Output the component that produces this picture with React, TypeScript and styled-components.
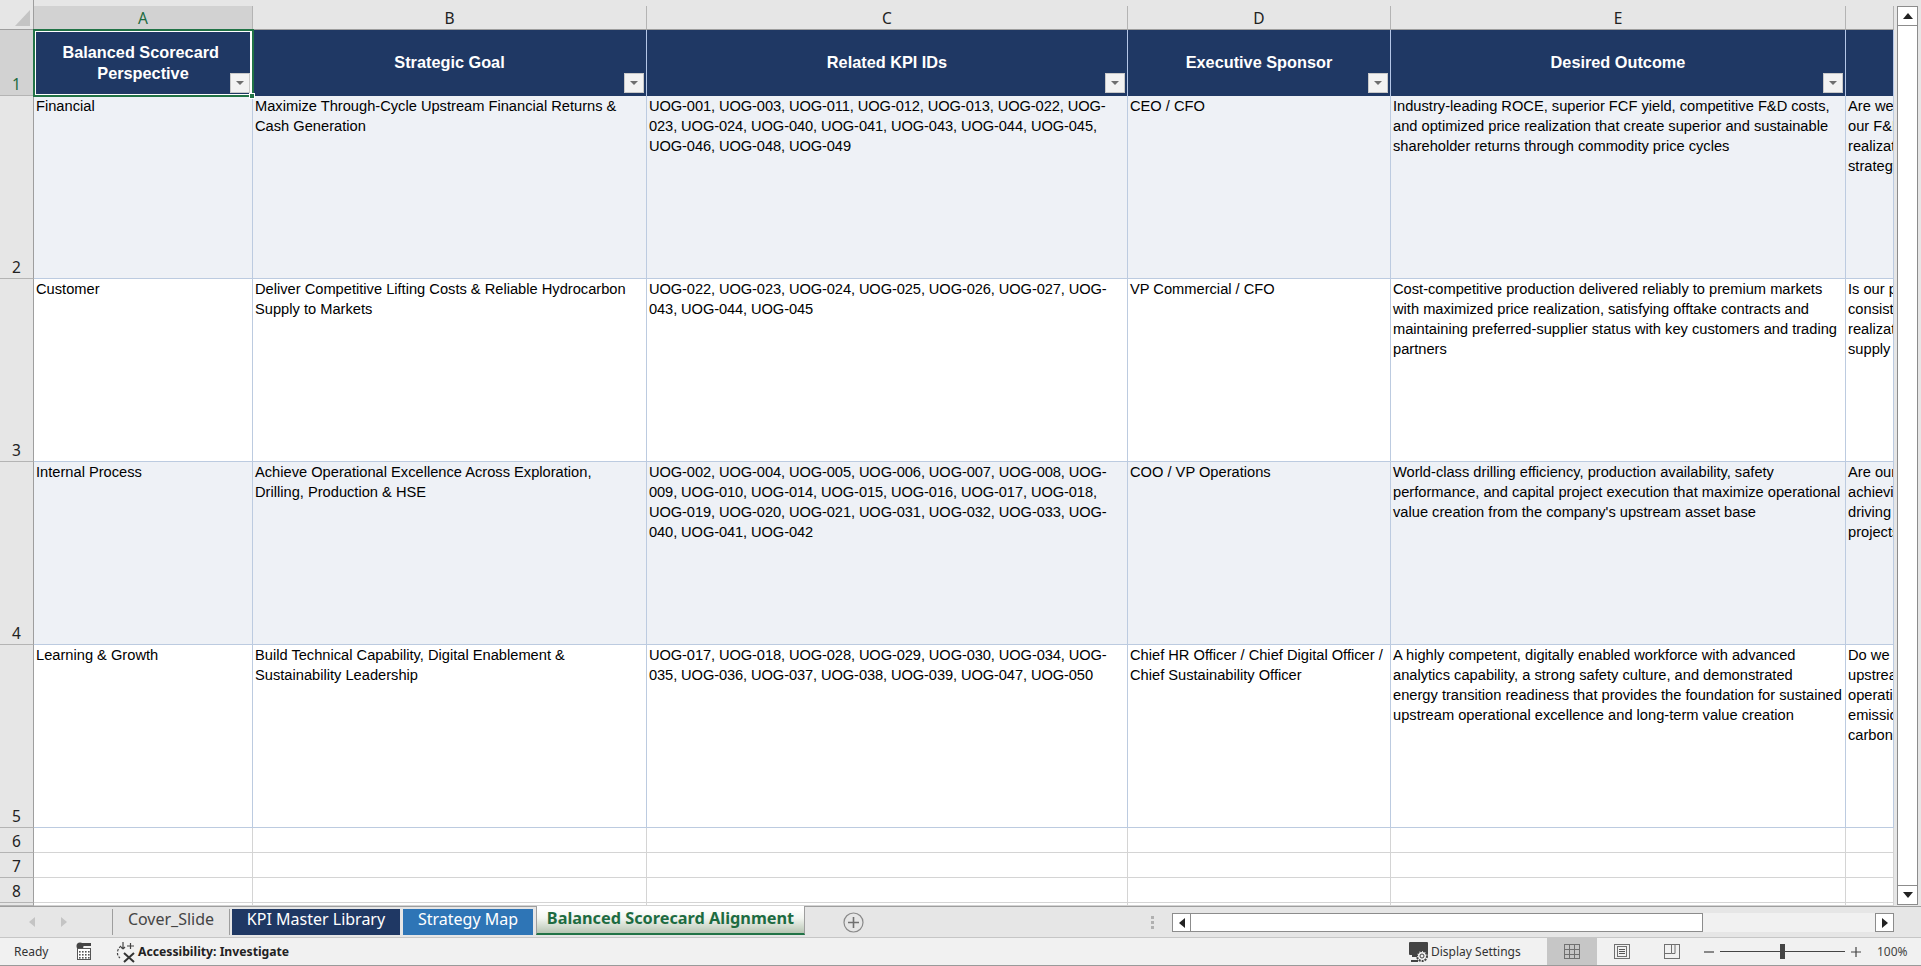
import React from 'react';
import styled, { createGlobalStyle } from 'styled-components';

interface RowData {
  row: number;
  alt: boolean;
  perspective: string[];
  goal: string[];
  kpis: string[];
  sponsor: string[];
  outcome: string[];
  question: string[];
}

const columns = [
  { letter: 'A', title: ['Balanced Scorecard\u00a0', 'Perspective'] },
  { letter: 'B', title: ['Strategic Goal'] },
  { letter: 'C', title: ['Related KPI IDs'] },
  { letter: 'D', title: ['Executive Sponsor'] },
  { letter: 'E', title: ['Desired Outcome'] },
];

const rows: RowData[] = [
  {
    row: 2,
    alt: true,
    perspective: ['Financial'],
    goal: ['Maximize Through-Cycle Upstream Financial Returns &', 'Cash Generation'],
    kpis: [
      'UOG-001, UOG-003, UOG-011, UOG-012, UOG-013, UOG-022, UOG-',
      '023, UOG-024, UOG-040, UOG-041, UOG-043, UOG-044, UOG-045,',
      'UOG-046, UOG-048, UOG-049',
    ],
    sponsor: ['CEO / CFO'],
    outcome: [
      'Industry-leading ROCE, superior FCF yield, competitive F&D costs,',
      'and optimized price realization that create superior and sustainable',
      'shareholder returns through commodity price cycles',
    ],
    question: ['Are we', 'our F&D', 'realization', 'strategy'],
  },
  {
    row: 3,
    alt: false,
    perspective: ['Customer'],
    goal: ['Deliver Competitive Lifting Costs & Reliable Hydrocarbon', 'Supply to Markets'],
    kpis: [
      'UOG-022, UOG-023, UOG-024, UOG-025, UOG-026, UOG-027, UOG-',
      '043, UOG-044, UOG-045',
    ],
    sponsor: ['VP Commercial / CFO'],
    outcome: [
      'Cost-competitive production delivered reliably to premium markets',
      'with maximized price realization, satisfying offtake contracts and',
      'maintaining preferred-supplier status with key customers and trading',
      'partners',
    ],
    question: ['Is our product', 'consistently', 'realization', 'supply'],
  },
  {
    row: 4,
    alt: true,
    perspective: ['Internal Process'],
    goal: ['Achieve Operational Excellence Across Exploration,', 'Drilling, Production & HSE'],
    kpis: [
      'UOG-002, UOG-004, UOG-005, UOG-006, UOG-007, UOG-008, UOG-',
      '009, UOG-010, UOG-014, UOG-015, UOG-016, UOG-017, UOG-018,',
      'UOG-019, UOG-020, UOG-021, UOG-031, UOG-032, UOG-033, UOG-',
      '040, UOG-041, UOG-042',
    ],
    sponsor: ['COO / VP Operations'],
    outcome: [
      'World-class drilling efficiency, production availability, safety',
      'performance, and capital project execution that maximize operational',
      "value creation from the company's upstream asset base",
    ],
    question: ['Are our', 'achieving', 'driving', 'projects'],
  },
  {
    row: 5,
    alt: false,
    perspective: ['Learning & Growth'],
    goal: ['Build Technical Capability, Digital Enablement &', 'Sustainability Leadership'],
    kpis: [
      'UOG-017, UOG-018, UOG-028, UOG-029, UOG-030, UOG-034, UOG-',
      '035, UOG-036, UOG-037, UOG-038, UOG-039, UOG-047, UOG-050',
    ],
    sponsor: ['Chief HR Officer / Chief Digital Officer /', 'Chief Sustainability Officer'],
    outcome: [
      'A highly competent, digitally enabled workforce with advanced',
      'analytics capability, a strong safety culture, and demonstrated',
      'energy transition readiness that provides the foundation for sustained',
      'upstream operational excellence and long-term value creation',
    ],
    question: ['Do we', 'upstream', 'operational', 'emissions', 'carbon'],
  },
];

const uiFont = `'Noto Sans', 'Open Sans', sans-serif`;
const cellFont = `'Liberation Sans', Arial, sans-serif`;

const GlobalStyle = createGlobalStyle`
  html, body {
    margin: 0;
    padding: 0;
    background: #e6e6e6;
    overflow: hidden;
  }
`;

const Window = styled.div`
  width: 1921px;
  height: 966px;
  display: flex;
  flex-direction: column;
  overflow: hidden;
  background: #e6e6e6;
`;

const Workspace = styled.div`
  height: 906px;
  display: flex;
  flex: none;
`;

const Sheet = styled.div`
  width: 1894px;
  flex: none;
  display: grid;
  grid-template-columns: 34px 219px 394px 481px 263px 455px 48px;
  grid-template-rows: 30px 66px repeat(4, 183px) repeat(3, 25px) 3px;
  overflow: hidden;
`;

const Corner = styled.div`
  padding-top: 10px;
  padding-left: 15px;
  box-sizing: border-box;
  border-right: 1px solid #9e9e9e;
  border-bottom: 1px solid #9e9e9e;
`;

const ColHeader = styled.div<{ $selected?: boolean }>`
  margin-top: 6px;
  box-sizing: border-box;
  display: flex;
  align-items: center;
  justify-content: center;
  font-family: ${uiFont};
  font-size: 15.5px;
  color: ${props => (props.$selected ? '#1d6b41' : '#222')};
  background: ${props => (props.$selected ? '#d2d2d2' : '#e6e6e6')};
  border-right: 1px solid #b4b4b4;
  border-bottom: 1px solid #9e9e9e;
`;

const RowHeader = styled.div<{ $selected?: boolean }>`
  box-sizing: border-box;
  display: flex;
  align-items: flex-end;
  justify-content: center;
  padding-bottom: 1px;
  font-family: ${uiFont};
  font-size: 15.5px;
  line-height: 20px;
  color: ${props => (props.$selected ? '#1d6b41' : '#222')};
  background: ${props => (props.$selected ? '#d2d2d2' : '#e6e6e6')};
  border-right: 1px solid #9e9e9e;
  border-bottom: 1px solid #b4b4b4;
`;

const HeaderCell = styled.div<{ $selected?: boolean }>`
  position: relative;
  box-sizing: border-box;
  display: flex;
  flex-direction: column;
  align-items: center;
  justify-content: center;
  background: #1f3864;
  color: #fff;
  font-family: ${cellFont};
  font-size: 16.3px;
  font-weight: 700;
  line-height: 21.5px;
  border-right: 1px solid #b4c6e7;
  ${props =>
    props.$selected &&
    `
    outline: 2px solid #217346;
    outline-offset: -1px;
    box-shadow: inset 0 0 0 2px #fff;
    z-index: 2;
  `}
`;

const SelectionHandle = styled.span`
  position: absolute;
  right: -3px;
  bottom: -3px;
  width: 4px;
  height: 4px;
  background: #217346;
  border: 1px solid #fff;
`;

const FilterButton = styled.span`
  position: absolute;
  right: 2px;
  bottom: 3px;
  width: 20px;
  height: 20px;
  box-sizing: border-box;
  display: flex;
  align-items: center;
  justify-content: center;
  background: #f2f2f2;
  border: 1px solid #c8c8c8;
  &::before {
    content: '';
    border-left: 4px solid transparent;
    border-right: 4px solid transparent;
    border-top: 4px solid #6e6e6e;
  }
`;

const DataCell = styled.div<{ $alt?: boolean; $tight?: boolean }>`
  box-sizing: border-box;
  padding: 0 1px 0 2px;
  overflow: hidden;
  background: ${props => (props.$alt ? '#eef1f6' : '#fff')};
  color: #000;
  font-family: ${cellFont};
  font-size: 14.67px;
  line-height: 20px;
  letter-spacing: ${props => (props.$tight ? '-0.1px' : 'normal')};
  border-right: 1px solid #bccbe0;
  border-bottom: 1px solid #bccbe0;
`;

const CellLine = styled.div`
  white-space: nowrap;
`;

const EmptyCell = styled.div`
  box-sizing: border-box;
  background: #fff;
  border-right: 1px solid #d4d4d4;
  border-bottom: 1px solid #d4d4d4;
`;

const VScroll = styled.div`
  width: 27px;
  flex: none;
  box-sizing: border-box;
  padding: 6px 0 1px 3px;
`;

const VScrollTrack = styled.div`
  width: 21px;
  height: 100%;
  box-sizing: border-box;
  display: flex;
  flex-direction: column;
  justify-content: space-between;
  background: #f1f1f1;
`;

const VThumb = styled.div`
  flex: 1;
  background: #fff;
  border: 1px solid #8c8c8c;
  border-width: 0 1px;
`;

const ScrollButton = styled.div`
  flex: none;
  height: 20px;
  box-sizing: border-box;
  display: flex;
  align-items: center;
  justify-content: center;
  background: #fff;
  border: 1px solid #8c8c8c;
`;

const TabBar = styled.div`
  height: 32px;
  flex: none;
  box-sizing: border-box;
  display: flex;
  align-items: stretch;
  background: #e6e6e6;
  border-top: 1px solid #9e9e9e;
  border-bottom: 1px solid #c6c6c6;
  padding-left: 27px;
`;

const TabNav = styled.div`
  width: 85px;
  flex: none;
  display: flex;
  align-items: center;
  gap: 22px;
  box-sizing: border-box;
`;

const Tab = styled.div<{ $bg?: string; $fg?: string; $sep?: boolean; $width: number; $gap?: number }>`
  width: ${props => props.$width}px;
  flex: none;
  margin: 2px 0 2px ${props => props.$gap || 0}px;
  padding-bottom: 6px;
  box-sizing: border-box;
  display: flex;
  align-items: center;
  justify-content: center;
  font-family: ${uiFont};
  font-size: 16px;
  color: ${props => props.$fg || '#444'};
  background: ${props => props.$bg || 'transparent'};
  ${props => props.$sep && 'border-left: 1px solid #9e9e9e; border-right: 1px solid #9e9e9e;'}
`;

const ActiveTab = styled.div`
  width: 269px;
  flex: none;
  margin: -1px 0 2px 3px;
  padding-bottom: 3px;
  box-sizing: border-box;
  display: flex;
  align-items: center;
  justify-content: center;
  font-family: ${uiFont};
  font-size: 16.3px;
  font-weight: 700;
  color: #1d6b41;
  background: linear-gradient(#fff 10%, #f2f5f0 45%, #b7c5b3 100%);
  border-left: 1px solid #9e9e9e;
  border-right: 1px solid #9e9e9e;
  border-bottom: 2px solid #217346;
`;

const AddSheet = styled.div`
  margin-left: 38px;
  flex: none;
  display: flex;
  align-items: center;
`;

const Splitter = styled.div`
  margin-left: 287px;
  flex: none;
  display: flex;
  flex-direction: column;
  justify-content: center;
  gap: 2px;
`;

const SplitterDot = styled.span`
  width: 3px;
  height: 3px;
  background: #b0b0b0;
`;

const HScroll = styled.div`
  margin-left: 18px;
  width: 722px;
  margin-top: 6px;
  margin-bottom: 5px;
  flex: none;
  display: flex;
  background: #f1f1f1;
`;

const HButton = styled.div`
  width: 19px;
  flex: none;
  box-sizing: border-box;
  display: flex;
  align-items: center;
  justify-content: center;
  background: #fff;
  border: 1px solid #8c8c8c;
`;

const HThumb = styled.div`
  width: 512px;
  flex: none;
  box-sizing: border-box;
  background: #fff;
  border: 1px solid #8c8c8c;
  border-left: none;
`;

const HTrack = styled.div`
  flex: 1;
`;

const StatusBar = styled.div`
  height: 28px;
  flex: none;
  box-sizing: border-box;
  display: flex;
  align-items: center;
  background: #f1f1f1;
  border-bottom: 1px solid #9a9a9a;
  font-family: ${uiFont};
  font-size: 12px;
  color: #333;
  padding-left: 14px;
`;

const Ready = styled.span`
  width: 62px;
  flex: none;
`;

const MacroSlot = styled.span`
  width: 40px;
  flex: none;
  display: flex;
  align-items: center;
`;

const A11ySlot = styled.span`
  width: 22px;
  flex: none;
  display: flex;
  align-items: center;
`;

const A11yText = styled.span`
  font-weight: 700;
  font-size: 12.2px;
  color: #222;
  width: 1271px;
  flex: none;
`;

const DisplaySettings = styled.span`
  display: flex;
  align-items: center;
  gap: 2px;
  width: 138px;
  flex: none;
`;

const ViewButton = styled.span<{ $active?: boolean }>`
  width: 50px;
  height: 27px;
  flex: none;
  display: flex;
  align-items: center;
  justify-content: center;
  background: ${props => (props.$active ? '#c6c6c6' : 'transparent')};
`;

const Zoom = styled.span`
  display: flex;
  align-items: center;
  margin-left: 6px;
  gap: 5px;
`;

const ZoomSlider = styled.span`
  position: relative;
  width: 125px;
  height: 1px;
  background: #444;
  flex: none;
`;

const ZoomThumb = styled.span`
  position: absolute;
  left: 60px;
  top: -7px;
  width: 5px;
  height: 15px;
  background: #444;
`;

const ZoomPercent = styled.span`
  margin-left: 10px;
  color: #444;
`;

const Triangle = ({ dir, color = '#222' }: { dir: 'up' | 'down' | 'left' | 'right'; color?: string }) => {
  const vertical = dir === 'up' || dir === 'down';
  const points = {
    up: '0,7 5,1 10,7',
    down: '0,1 5,7 10,1',
    left: '8,0 2,5 8,10',
    right: '2,0 8,5 2,10',
  }[dir];
  return (
    <svg width="10" height={vertical ? 8 : 10} viewBox={vertical ? '0 0 10 8' : '0 0 10 10'}>
      <polygon points={points} fill={color} />
    </svg>
  );
};

const MacroIcon = () => (
  <svg width="16" height="19" viewBox="0 0 16 19">
    <circle cx="4" cy="4" r="3.5" fill="#444" />
    <rect x="6" y="1" width="9" height="3" fill="#444" />
    <rect x="1.5" y="6.5" width="13" height="11" fill="#fff" stroke="#555" />
    {[3, 6, 9, 12].map(x => [9, 12, 15].map(y => <rect key={`${x}-${y}`} x={x} y={y} width="1.6" height="1.6" fill="#555" />))}
  </svg>
);

const AccessibilityIcon = () => (
  <svg width="20" height="22" viewBox="0 0 20 22" fill="none" stroke="#444" strokeWidth="1.2">
    <path d="M5 5 C1 8 0 14 4 17" strokeDasharray="2.5 1.5" />
    <path d="M7 1 V8 M7 8 L5 6 M7 8 L9 6" />
    <path d="M11 5 H18 M14.5 2 V8" />
    <path d="M8 12 L18 21 M18 12 L8 21" strokeWidth="2" stroke="#333" />
  </svg>
);

const DisplayIcon = () => (
  <svg width="20" height="22" viewBox="0 0 20 22">
    <rect x="0" y="1" width="19" height="13" rx="1" fill="#444" />
    <rect x="3" y="14" width="5" height="2" fill="#444" />
    <rect x="2" y="19" width="7" height="2" fill="#444" />
    <circle cx="13" cy="15" r="5" fill="#f1f1f1" stroke="#444" strokeWidth="2" strokeDasharray="2 1" />
    <circle cx="13" cy="15" r="2" fill="#f1f1f1" stroke="#444" />
  </svg>
);

const NormalViewIcon = () => (
  <svg width="16" height="15" viewBox="0 0 16 15" fill="none" stroke="#707070">
    <rect x="0.5" y="0.5" width="15" height="14" />
    <path d="M0 5.5H16M0 10.5H16M5.5 0V15M10.5 0V15" />
  </svg>
);

const PageLayoutIcon = () => (
  <svg width="16" height="15" viewBox="0 0 16 15" fill="none" stroke="#707070">
    <rect x="0.5" y="0.5" width="15" height="14" />
    <rect x="3.5" y="2.5" width="9" height="10" />
    <path d="M5 5.5H11M5 7.5H11M5 9.5H11" stroke="#555" />
  </svg>
);

const PageBreakIcon = () => (
  <svg width="16" height="15" viewBox="0 0 16 15" fill="none" stroke="#707070">
    <rect x="0.5" y="0.5" width="15" height="14" />
    <path d="M7.5 0V9.5H0.5M11 0V9.5H7.5" />
  </svg>
);

export default function App() {
  const emptyRows = [6, 7, 8, 9];
  return (
    <>
      <GlobalStyle />
      <Window>
        <Workspace>
          <Sheet>
            <Corner>
              <svg width="15" height="16" viewBox="0 0 15 16">
                <polygon points="15,0 15,16 0,16" fill="#c4c4c4" />
              </svg>
            </Corner>
            {columns.map((col, i) => (
              <ColHeader key={col.letter} $selected={i === 0}>{col.letter}</ColHeader>
            ))}
            <ColHeader />

            <RowHeader $selected>1</RowHeader>
            {columns.map((col, i) => (
              <HeaderCell key={col.letter} $selected={i === 0}>
                {col.title.map(line => <CellLine key={line}>{line}</CellLine>)}
                <FilterButton />
                {i === 0 && <SelectionHandle />}
              </HeaderCell>
            ))}
            <HeaderCell />

            {rows.map(r => (
              <React.Fragment key={r.row}>
                <RowHeader>{r.row}</RowHeader>
                {[r.perspective, r.goal, r.kpis, r.sponsor, r.outcome, r.question].map((lines, i) => (
                  <DataCell key={i} $alt={r.alt} $tight={lines === r.kpis}>
                    {lines.map(line => <CellLine key={line}>{line}</CellLine>)}
                  </DataCell>
                ))}
              </React.Fragment>
            ))}

            {emptyRows.map(n => (
              <React.Fragment key={n}>
                <RowHeader>{n < 9 ? n : ''}</RowHeader>
                {[0, 1, 2, 3, 4, 5].map(i => <EmptyCell key={i} />)}
              </React.Fragment>
            ))}
          </Sheet>
          <VScroll>
            <VScrollTrack>
              <ScrollButton><Triangle dir="up" /></ScrollButton>
              <VThumb />
              <ScrollButton><Triangle dir="down" /></ScrollButton>
            </VScrollTrack>
          </VScroll>
        </Workspace>

        <TabBar>
          <TabNav>
            <Triangle dir="left" color="#c4c4c4" />
            <Triangle dir="right" color="#c4c4c4" />
          </TabNav>
          <Tab $sep $width={118}>Cover_Slide</Tab>
          <Tab $bg="#1f3864" $fg="#fff" $width={168} $gap={2}>KPI Master Library</Tab>
          <Tab $bg="#2e75b6" $fg="#fff" $width={130} $gap={3}>Strategy Map</Tab>
          <ActiveTab>Balanced Scorecard Alignment</ActiveTab>
          <AddSheet>
            <svg width="21" height="21" viewBox="0 0 21 21" fill="none" stroke="#8a8a8a">
              <circle cx="10.5" cy="10.5" r="9.5" strokeWidth="1.2" />
              <path d="M10.5 5V16M5 10.5H16" stroke="#707070" strokeWidth="1.6" />
            </svg>
          </AddSheet>
          <Splitter>
            <SplitterDot />
            <SplitterDot />
            <SplitterDot />
          </Splitter>
          <HScroll>
            <HButton><Triangle dir="left" /></HButton>
            <HThumb />
            <HTrack />
            <HButton><Triangle dir="right" /></HButton>
          </HScroll>
        </TabBar>

        <StatusBar>
          <Ready>Ready</Ready>
          <MacroSlot><MacroIcon /></MacroSlot>
          <A11ySlot><AccessibilityIcon /></A11ySlot>
          <A11yText>Accessibility: Investigate</A11yText>
          <DisplaySettings><DisplayIcon />Display Settings</DisplaySettings>
          <ViewButton $active><NormalViewIcon /></ViewButton>
          <ViewButton><PageLayoutIcon /></ViewButton>
          <ViewButton><PageBreakIcon /></ViewButton>
          <Zoom>
            <svg width="12" height="12" viewBox="0 0 12 12"><path d="M1 6H11" stroke="#444" strokeWidth="1.2" /></svg>
            <ZoomSlider><ZoomThumb /></ZoomSlider>
            <svg width="12" height="12" viewBox="0 0 12 12"><path d="M1 6H11M6 1V11" stroke="#444" strokeWidth="1.2" /></svg>
            <ZoomPercent>100%</ZoomPercent>
          </Zoom>
        </StatusBar>
      </Window>
    </>
  );
}
